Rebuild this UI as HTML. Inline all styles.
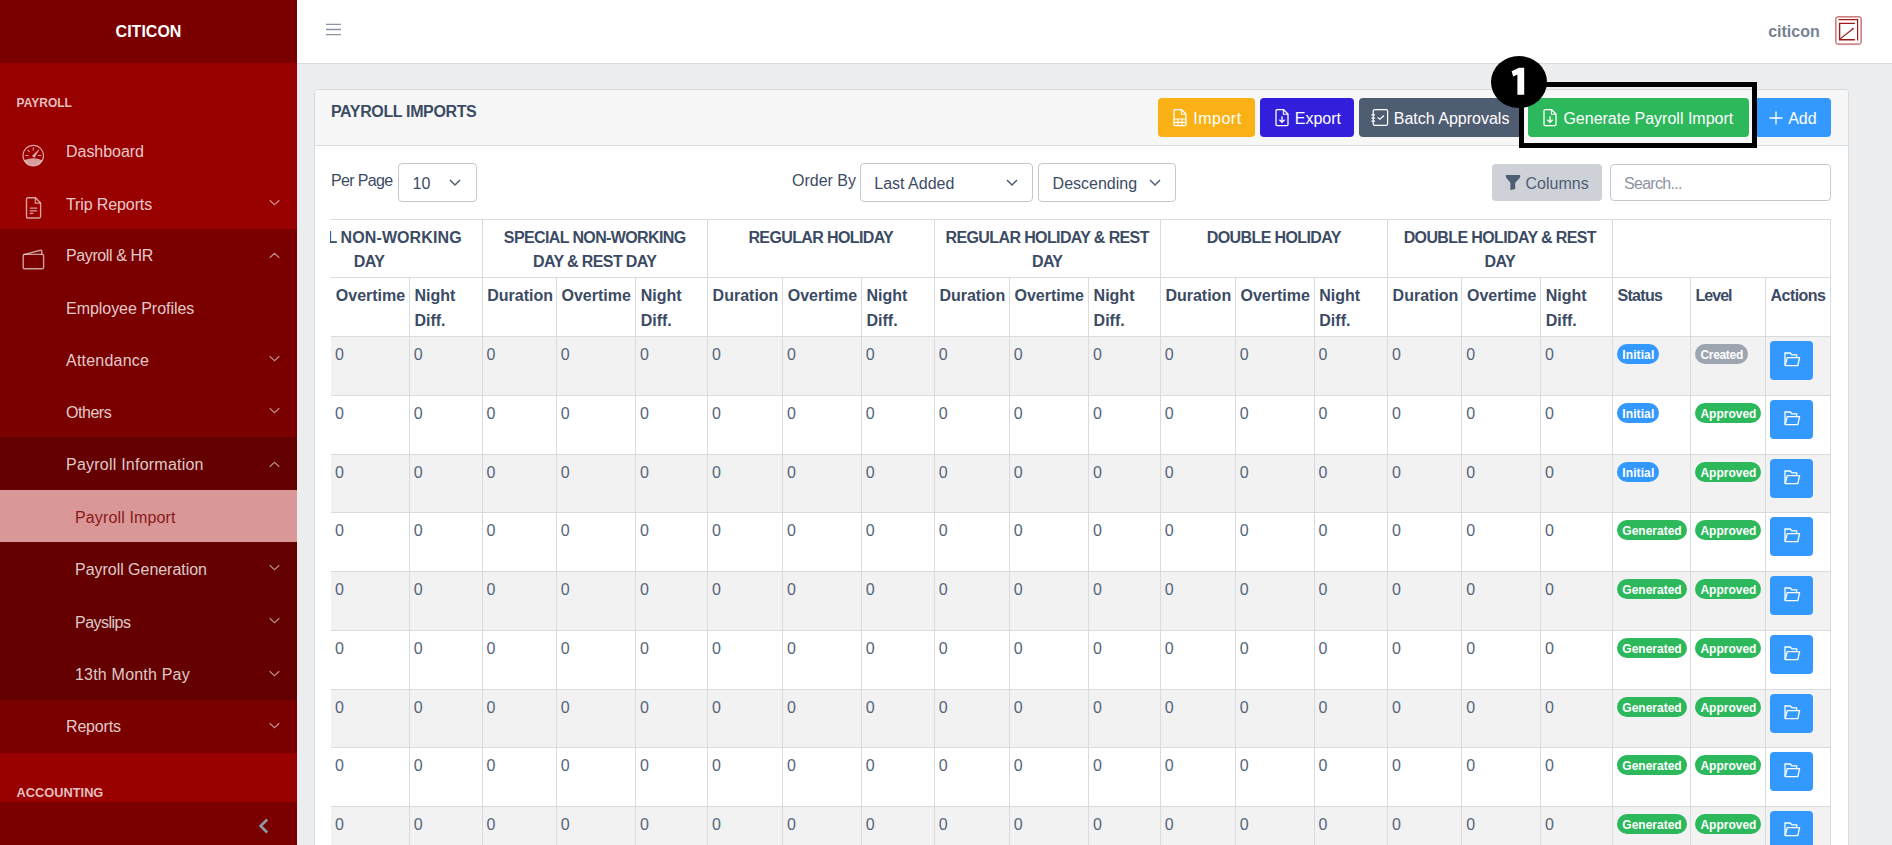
<!DOCTYPE html>
<html><head><meta charset="utf-8"><style>
html,body{margin:0;padding:0;width:1892px;height:845px;overflow:hidden;background:#ebedef;font-family:"Liberation Sans", sans-serif;}
.t{position:absolute;white-space:nowrap;}
.b{position:absolute;}
svg.b{display:block;overflow:visible}
.bd{position:absolute;height:20px;line-height:23.4px;padding:0 5px;border-radius:10px;color:#fff;font-weight:bold;font-size:12px;white-space:nowrap;}
</style></head><body>
<div class="b" style="left:0.00px;top:0.00px;width:297.00px;height:63.00px;background:#7a0000"></div>
<div class="b" style="left:0.00px;top:63.00px;width:297.00px;height:782.00px;background:#990000"></div>
<div class="t" style="left:-151.50px;width:600px;text-align:center;top:22.16px;font-size:16px;line-height:20px;font-weight:bold;color:#fff;">CITICON</div>
<div class="t" style="left:16.60px;top:95.94px;font-size:12px;line-height:15px;font-weight:bold;color:rgba(255,255,255,.75);">PAYROLL</div>
<div class="t" style="left:66.00px;top:142.06px;font-size:16px;line-height:20px;font-weight:normal;color:rgba(255,255,255,.8);letter-spacing:-0.034px;">Dashboard</div>
<div class="t" style="left:66.00px;top:195.06px;font-size:16px;line-height:20px;font-weight:normal;color:rgba(255,255,255,.8);letter-spacing:-0.112px;">Trip Reports</div>
<svg class="b" style="left:268.50px;top:198.88px;" width="11" height="7" viewBox="0 0 11 7"><path d="M0.7 1.2 L5.5 5.6 L10.3 1.2" fill="none" stroke="rgba(255,255,255,.55)" stroke-width="1.2"/></svg>
<div class="b" style="left:0.00px;top:228.90px;width:297.00px;height:52.10px;background:#7a0000"></div>
<div class="t" style="left:66.00px;top:246.16px;font-size:16px;line-height:20px;font-weight:normal;color:rgba(255,255,255,.8);letter-spacing:-0.398px;">Payroll &amp; HR</div>
<svg class="b" style="left:268.50px;top:252.45px;" width="11" height="7" viewBox="0 0 11 7"><path d="M0.7 5.8 L5.5 1.4 L10.3 5.8" fill="none" stroke="rgba(255,255,255,.55)" stroke-width="1.2"/></svg>
<div class="b" style="left:0.00px;top:281.00px;width:297.00px;height:52.00px;background:#7a0000"></div>
<div class="t" style="left:66.00px;top:299.36px;font-size:16px;line-height:20px;font-weight:normal;color:rgba(255,255,255,.8);letter-spacing:-0.041px;">Employee Profiles</div>
<div class="b" style="left:0.00px;top:333.00px;width:297.00px;height:52.00px;background:#7a0000"></div>
<div class="t" style="left:66.00px;top:350.96px;font-size:16px;line-height:20px;font-weight:normal;color:rgba(255,255,255,.8);letter-spacing:0.217px;">Attendance</div>
<svg class="b" style="left:268.50px;top:355.00px;" width="11" height="7" viewBox="0 0 11 7"><path d="M0.7 1.2 L5.5 5.6 L10.3 1.2" fill="none" stroke="rgba(255,255,255,.55)" stroke-width="1.2"/></svg>
<div class="b" style="left:0.00px;top:385.00px;width:297.00px;height:52.00px;background:#7a0000"></div>
<div class="t" style="left:66.00px;top:403.36px;font-size:16px;line-height:20px;font-weight:normal;color:rgba(255,255,255,.8);letter-spacing:-0.464px;">Others</div>
<svg class="b" style="left:268.50px;top:407.00px;" width="11" height="7" viewBox="0 0 11 7"><path d="M0.7 1.2 L5.5 5.6 L10.3 1.2" fill="none" stroke="rgba(255,255,255,.55)" stroke-width="1.2"/></svg>
<div class="b" style="left:0.00px;top:437.00px;width:297.00px;height:53.00px;background:#640000"></div>
<div class="t" style="left:66.00px;top:455.06px;font-size:16px;line-height:20px;font-weight:normal;color:rgba(255,255,255,.8);letter-spacing:0.228px;">Payroll Information</div>
<svg class="b" style="left:268.50px;top:461.00px;" width="11" height="7" viewBox="0 0 11 7"><path d="M0.7 5.8 L5.5 1.4 L10.3 5.8" fill="none" stroke="rgba(255,255,255,.55)" stroke-width="1.2"/></svg>
<div class="b" style="left:0.00px;top:490.00px;width:297.00px;height:52.00px;background:#d99797"></div>
<div class="t" style="left:75.00px;top:507.86px;font-size:16px;line-height:20px;font-weight:normal;color:#8a1a1a;letter-spacing:0.131px;">Payroll Import</div>
<div class="b" style="left:0.00px;top:542.00px;width:297.00px;height:52.70px;background:#640000"></div>
<div class="t" style="left:75.00px;top:560.06px;font-size:16px;line-height:20px;font-weight:normal;color:rgba(255,255,255,.8);letter-spacing:-0.031px;">Payroll Generation</div>
<svg class="b" style="left:268.50px;top:564.35px;" width="11" height="7" viewBox="0 0 11 7"><path d="M0.7 1.2 L5.5 5.6 L10.3 1.2" fill="none" stroke="rgba(255,255,255,.55)" stroke-width="1.2"/></svg>
<div class="b" style="left:0.00px;top:594.70px;width:297.00px;height:52.60px;background:#640000"></div>
<div class="t" style="left:75.00px;top:612.56px;font-size:16px;line-height:20px;font-weight:normal;color:rgba(255,255,255,.8);letter-spacing:-0.511px;">Payslips</div>
<svg class="b" style="left:268.50px;top:617.00px;" width="11" height="7" viewBox="0 0 11 7"><path d="M0.7 1.2 L5.5 5.6 L10.3 1.2" fill="none" stroke="rgba(255,255,255,.55)" stroke-width="1.2"/></svg>
<div class="b" style="left:0.00px;top:647.30px;width:297.00px;height:52.70px;background:#640000"></div>
<div class="t" style="left:75.00px;top:664.86px;font-size:16px;line-height:20px;font-weight:normal;color:rgba(255,255,255,.8);letter-spacing:0.202px;">13th Month Pay</div>
<svg class="b" style="left:268.50px;top:669.65px;" width="11" height="7" viewBox="0 0 11 7"><path d="M0.7 1.2 L5.5 5.6 L10.3 1.2" fill="none" stroke="rgba(255,255,255,.55)" stroke-width="1.2"/></svg>
<div class="b" style="left:0.00px;top:700.00px;width:297.00px;height:52.90px;background:#7a0000"></div>
<div class="t" style="left:66.00px;top:717.16px;font-size:16px;line-height:20px;font-weight:normal;color:rgba(255,255,255,.8);letter-spacing:-0.170px;">Reports</div>
<svg class="b" style="left:268.50px;top:722.45px;" width="11" height="7" viewBox="0 0 11 7"><path d="M0.7 1.2 L5.5 5.6 L10.3 1.2" fill="none" stroke="rgba(255,255,255,.55)" stroke-width="1.2"/></svg>
<svg class="b" style="left:18.00px;top:140.00px;" width="30" height="30" viewBox="0 0 30 30"><circle cx="15.25" cy="15.55" r="10.25" fill="none" stroke="rgba(255,255,255,.62)" stroke-width="1.15"/><path d="M6.2 20.2 Q15.25 16.2 24.3 20.2 A10.25 10.25 0 0 1 6.2 20.2Z" fill="rgba(255,255,255,.62)"/><path d="M15.25 7.4V10.4 M9.6 9.9L11.5 11.8 M7.4 15.5H10.6 M19.9 15.5H23.1" stroke="rgba(255,255,255,.62)" stroke-width="1.1" fill="none"/><path d="M14.3 15.9 L20.9 9.8 L16.4 17.4 Z" fill="rgba(255,255,255,.62)" stroke="rgba(255,255,255,.62)" stroke-width="0.6" stroke-linejoin="round"/></svg>
<svg class="b" style="left:25.00px;top:197.00px;" width="17" height="22" viewBox="0 0 17 22"><path d="M1.5 2.2Q1.5 0.8 2.9 0.8H10.5L15.6 6V19.6Q15.6 21 14.2 21H2.9Q1.5 21 1.5 19.6Z" fill="none" stroke="rgba(255,255,255,.62)" stroke-width="1.4"/><path d="M10.3 0.8V6.2H15.6" fill="none" stroke="rgba(255,255,255,.62)" stroke-width="1.2"/><path d="M4.8 11.2H12.2M4.8 13.8H12.2M4.8 16.4H8.2" stroke="rgba(255,255,255,.62)" stroke-width="1.3"/></svg>
<svg class="b" style="left:22.00px;top:249.00px;" width="23" height="21" viewBox="0 0 23 21"><rect x="1.2" y="5.4" width="20.4" height="14.4" rx="1.4" fill="none" stroke="rgba(255,255,255,.62)" stroke-width="1.4"/><path d="M1.6 5.6L18.6 1.2Q19.8 1 19.8 2.2V5.4" fill="none" stroke="rgba(255,255,255,.62)" stroke-width="1.4"/></svg>
<div class="t" style="left:16.60px;top:785.26px;font-size:12.8px;line-height:16px;font-weight:bold;color:rgba(255,255,255,.75);">ACCOUNTING</div>
<div class="b" style="left:0.00px;top:802.00px;width:297.00px;height:43.00px;background:#7a0000"></div>
<svg class="b" style="left:258.00px;top:818.00px;" width="11" height="16" viewBox="0 0 11 16"><path d="M9.2 1.5L2.6 8L9.2 14.5" fill="none" stroke="#8a98a8" stroke-width="2.6"/></svg>
<div class="b" style="left:297.00px;top:0.00px;width:1595.00px;height:63.00px;background:#fff"></div>
<div class="b" style="left:297.00px;top:63.00px;width:1595.00px;height:1.00px;background:#d8dbe0"></div>
<div class="b" style="left:297.00px;top:64.00px;width:1595.00px;height:781.00px;background:#ebedef"></div>
<svg class="b" style="left:325.00px;top:22.00px;" width="17" height="15" viewBox="0 0 17 15"><path d="M1 2.4H16M1 7.5H16M1 12.6H16" stroke="#8a93a2" stroke-width="1.3"/></svg>
<div class="t" style="left:1219.70px;width:600px;text-align:right;top:22.16px;font-size:16px;line-height:20px;font-weight:bold;color:#768192;">citicon</div>
<svg class="b" style="left:1835.00px;top:16.00px;" width="27" height="29" viewBox="0 0 27 29"><rect x="0.9" y="0.9" width="25.2" height="27.2" rx="1.6" fill="none" stroke="#b03030" stroke-width="1"/><path d="M3.6 3.6H22.6V24.6" fill="none" stroke="#a01818" stroke-width="1.2"/><path d="M19.9 7.4H4.6V23.8H19.9" fill="none" stroke="#a01818" stroke-width="1.4"/><path d="M4.6 23.4L17.4 13.2" stroke="#a01818" stroke-width="1.2"/><circle cx="17.8" cy="12.8" r="1" fill="#a01818"/></svg>
<div class="b" style="left:314.00px;top:89.00px;width:1535.00px;height:781.00px;background:#fff;border:1px solid #d8dbe0;border-radius:4px;box-sizing:border-box"></div>
<div class="b" style="left:315.00px;top:90.00px;width:1533.00px;height:55.00px;background:#f7f7f7;border-radius:3px 3px 0 0"></div>
<div class="b" style="left:315.00px;top:145.00px;width:1533.00px;height:1.00px;background:#d8dbe0"></div>
<div class="t" style="left:331.00px;top:102.46px;font-size:16px;line-height:20px;font-weight:bold;color:#3c4b64;letter-spacing:-0.36px;">PAYROLL IMPORTS</div>
<div class="b" style="left:1158.00px;top:98.00px;width:97.00px;height:39.00px;background:#f9b115;border-radius:4px"></div>
<div class="t" style="left:1193.30px;top:109.36px;font-size:16px;line-height:20px;font-weight:normal;color:#fff;letter-spacing:0.5px;">Import</div>
<svg class="b" style="left:1173.00px;top:109.00px;" width="14" height="18" viewBox="0 0 14 18"><path d="M1 1.8Q1 0.7 2.1 0.7H8.6L13 5V15.6Q13 16.6 11.9 16.6H2.1Q1 16.6 1 15.6Z" fill="none" stroke="#fff" stroke-width="1.3"/><path d="M8.4 0.7V5.2H13" fill="none" stroke="#fff" stroke-width="1.1"/><path d="M1 10H13M1 13.3H13M5 10V16.6M9 10V16.6" stroke="#fff" stroke-width="1.2"/></svg>
<div class="b" style="left:1260.00px;top:98.00px;width:93.50px;height:39.00px;background:#321fdb;border-radius:4px"></div>
<div class="t" style="left:1294.80px;top:109.36px;font-size:16px;line-height:20px;font-weight:normal;color:#fff;letter-spacing:0px;">Export</div>
<svg class="b" style="left:1275.00px;top:109.00px;" width="14" height="18" viewBox="0 0 14 18"><path d="M1 1.8Q1 0.7 2.1 0.7H8.6L13 5V15.6Q13 16.6 11.9 16.6H2.1Q1 16.6 1 15.6Z" fill="none" stroke="#fff" stroke-width="1.3"/><path d="M8.4 0.7V5.2H13" fill="none" stroke="#fff" stroke-width="1.1"/><path d="M7 7.2V13.4M4.4 10.8L7 13.4L9.6 10.8" fill="none" stroke="#fff" stroke-width="1.3"/></svg>
<div class="b" style="left:1358.70px;top:98.00px;width:164.30px;height:39.00px;background:#4f5d73;border-radius:4px"></div>
<div class="t" style="left:1393.80px;top:109.36px;font-size:16px;line-height:20px;font-weight:normal;color:#fff;letter-spacing:0px;">Batch Approvals</div>
<svg class="b" style="left:1370.00px;top:108.00px;" width="20" height="20" viewBox="0 0 20 20"><path d="M3.2 5V3.2Q3.2 1.7 4.7 1.7H16.2Q17.6 1.7 17.6 3.2V15.8Q17.6 17.3 16.2 17.3H4.7Q3.2 17.3 3.2 15.8Z" fill="none" stroke="#fff" stroke-width="1.25"/><path d="M1.9 6.8H4.6M1.9 10.1H4.6M1.9 13.2H4.6" stroke="#fff" stroke-width="1.2" stroke-linecap="round"/><path d="M7.6 9.4L9.9 11.3L14 7.5" fill="none" stroke="#fff" stroke-width="1.2"/></svg>
<div class="b" style="left:1528.20px;top:98.00px;width:220.80px;height:39.00px;background:#2eb85c;border-radius:4px"></div>
<div class="t" style="left:1563.40px;top:109.36px;font-size:16px;line-height:20px;font-weight:normal;color:#fff;letter-spacing:0px;">Generate Payroll Import</div>
<svg class="b" style="left:1543.00px;top:109.00px;" width="14" height="18" viewBox="0 0 14 18"><path d="M1 1.8Q1 0.7 2.1 0.7H8.6L13 5V15.6Q13 16.6 11.9 16.6H2.1Q1 16.6 1 15.6Z" fill="none" stroke="#fff" stroke-width="1.3"/><path d="M8.4 0.7V5.2H13" fill="none" stroke="#fff" stroke-width="1.1"/><path d="M7 7.2V13.4M4.4 10.8L7 13.4L9.6 10.8" fill="none" stroke="#fff" stroke-width="1.3"/></svg>
<div class="b" style="left:1753.50px;top:98.00px;width:77.50px;height:39.00px;background:#39f;border-radius:4px"></div>
<svg class="b" style="left:1768.50px;top:111.00px;" width="14" height="14" viewBox="0 0 14 14"><path d="M7 0.5V13.5M0.5 7H13.5" stroke="#fff" stroke-width="1.3"/></svg>
<div class="t" style="left:1788.20px;top:109.36px;font-size:16px;line-height:20px;font-weight:normal;color:#fff;">Add</div>
<div class="b" style="left:1519.00px;top:82.00px;width:238.00px;height:66.00px;border:5px solid #000;box-sizing:border-box"></div>
<div class="b" style="left:1491px;top:55.8px;width:56px;height:52px;border-radius:50%;background:#000"></div>
<svg class="b" style="left:1510.00px;top:66.50px;" width="16" height="30" viewBox="0 0 16 30"><path d="M1.6 4.2L9 0.8H14.2V27.8H7.4V7.6L3.2 9.4Z" fill="#fff"/></svg>
<div class="t" style="left:331.00px;top:171.16px;font-size:16px;line-height:20px;font-weight:normal;color:#3c4b64;letter-spacing:-0.65px;">Per Page</div>
<div class="b" style="left:398.00px;top:163.00px;width:78.50px;height:39.00px;border:1px solid #c4c9d0;border-radius:4px;background:#fff;box-sizing:border-box"></div>
<div class="t" style="left:412.50px;top:174.16px;font-size:16px;line-height:20px;font-weight:normal;color:#3c4b64;">10</div>
<svg class="b" style="left:449.00px;top:178.50px;" width="12" height="7" viewBox="0 0 12 7"><path d="M1 1L6 6L11 1" fill="none" stroke="#4f5d73" stroke-width="1.5"/></svg>
<div class="t" style="left:792.00px;top:171.16px;font-size:16px;line-height:20px;font-weight:normal;color:#3c4b64;">Order By</div>
<div class="b" style="left:860.40px;top:163.00px;width:173.10px;height:39.00px;border:1px solid #c4c9d0;border-radius:4px;background:#fff;box-sizing:border-box"></div>
<div class="t" style="left:874.30px;top:174.16px;font-size:16px;line-height:20px;font-weight:normal;color:#3c4b64;">Last Added</div>
<svg class="b" style="left:1006.00px;top:178.50px;" width="12" height="7" viewBox="0 0 12 7"><path d="M1 1L6 6L11 1" fill="none" stroke="#4f5d73" stroke-width="1.5"/></svg>
<div class="b" style="left:1038.20px;top:163.00px;width:137.40px;height:39.00px;border:1px solid #c4c9d0;border-radius:4px;background:#fff;box-sizing:border-box"></div>
<div class="t" style="left:1052.60px;top:174.16px;font-size:16px;line-height:20px;font-weight:normal;color:#3c4b64;">Descending</div>
<svg class="b" style="left:1148.50px;top:178.50px;" width="12" height="7" viewBox="0 0 12 7"><path d="M1 1L6 6L11 1" fill="none" stroke="#4f5d73" stroke-width="1.5"/></svg>
<div class="b" style="left:1491.70px;top:164.00px;width:110.10px;height:37.00px;background:#ced2d8;border-radius:4px"></div>
<svg class="b" style="left:1505.00px;top:174.00px;" width="16" height="17" viewBox="0 0 16 17"><path d="M0.9 1.2Q0.9 0.9 1.3 0.9H14.8Q15.2 0.9 15.2 1.2V2.6Q15.2 3.2 14.6 3.9L10.2 8.8V14.9L5.4 16.1V8.8L1.4 3.9Q0.9 3.2 0.9 2.6Z" fill="#4f5d73"/></svg>
<div class="t" style="left:1525.50px;top:173.66px;font-size:16px;line-height:20px;font-weight:normal;color:#4f5d73;">Columns</div>
<div class="b" style="left:1610.20px;top:164.00px;width:220.60px;height:37.00px;border:1px solid #c4c9d0;border-radius:4px;background:#fff;box-sizing:border-box"></div>
<div class="t" style="left:1624.00px;top:173.66px;font-size:16px;line-height:20px;font-weight:normal;color:#8a93a2;letter-spacing:-0.7px;">Search...</div>
<div class="b" style="left:330px;top:0;width:1501px;height:845px;overflow:hidden">
<div class="b" style="left:1.00px;top:336.00px;width:1499.50px;height:59.00px;background:#f2f2f3"></div>
<div class="b" style="left:1.00px;top:454.00px;width:1499.50px;height:58.00px;background:#f2f2f3"></div>
<div class="b" style="left:1.00px;top:571.00px;width:1499.50px;height:59.00px;background:#f2f2f3"></div>
<div class="b" style="left:1.00px;top:689.00px;width:1499.50px;height:58.00px;background:#f2f2f3"></div>
<div class="b" style="left:1.00px;top:806.00px;width:1499.50px;height:59.00px;background:#f2f2f3"></div>
<div class="b" style="left:1.00px;top:219.00px;width:1499.50px;height:1.00px;background:#d8dbe0"></div>
<div class="b" style="left:1.00px;top:277.00px;width:1499.50px;height:1.00px;background:#d8dbe0"></div>
<div class="b" style="left:1.00px;top:336.00px;width:1499.50px;height:1.00px;background:#d8dbe0"></div>
<div class="b" style="left:1.00px;top:395.00px;width:1499.50px;height:1.00px;background:#d8dbe0"></div>
<div class="b" style="left:1.00px;top:454.00px;width:1499.50px;height:1.00px;background:#d8dbe0"></div>
<div class="b" style="left:1.00px;top:512.00px;width:1499.50px;height:1.00px;background:#d8dbe0"></div>
<div class="b" style="left:1.00px;top:571.00px;width:1499.50px;height:1.00px;background:#d8dbe0"></div>
<div class="b" style="left:1.00px;top:630.00px;width:1499.50px;height:1.00px;background:#d8dbe0"></div>
<div class="b" style="left:1.00px;top:689.00px;width:1499.50px;height:1.00px;background:#d8dbe0"></div>
<div class="b" style="left:1.00px;top:747.00px;width:1499.50px;height:1.00px;background:#d8dbe0"></div>
<div class="b" style="left:1.00px;top:806.00px;width:1499.50px;height:1.00px;background:#d8dbe0"></div>
<div class="b" style="left:1.00px;top:865.00px;width:1499.50px;height:1.00px;background:#d8dbe0"></div>
<div class="b" style="left:79.00px;top:277.50px;width:1.00px;height:567.50px;background:#d8dbe0"></div>
<div class="b" style="left:152.00px;top:219.50px;width:1.00px;height:625.50px;background:#d8dbe0"></div>
<div class="b" style="left:226.00px;top:277.50px;width:1.00px;height:567.50px;background:#d8dbe0"></div>
<div class="b" style="left:305.00px;top:277.50px;width:1.00px;height:567.50px;background:#d8dbe0"></div>
<div class="b" style="left:377.00px;top:219.50px;width:1.00px;height:625.50px;background:#d8dbe0"></div>
<div class="b" style="left:452.00px;top:277.50px;width:1.00px;height:567.50px;background:#d8dbe0"></div>
<div class="b" style="left:531.00px;top:277.50px;width:1.00px;height:567.50px;background:#d8dbe0"></div>
<div class="b" style="left:604.00px;top:219.50px;width:1.00px;height:625.50px;background:#d8dbe0"></div>
<div class="b" style="left:679.00px;top:277.50px;width:1.00px;height:567.50px;background:#d8dbe0"></div>
<div class="b" style="left:758.00px;top:277.50px;width:1.00px;height:567.50px;background:#d8dbe0"></div>
<div class="b" style="left:830.00px;top:219.50px;width:1.00px;height:625.50px;background:#d8dbe0"></div>
<div class="b" style="left:905.00px;top:277.50px;width:1.00px;height:567.50px;background:#d8dbe0"></div>
<div class="b" style="left:984.00px;top:277.50px;width:1.00px;height:567.50px;background:#d8dbe0"></div>
<div class="b" style="left:1057.00px;top:219.50px;width:1.00px;height:625.50px;background:#d8dbe0"></div>
<div class="b" style="left:1131.00px;top:277.50px;width:1.00px;height:567.50px;background:#d8dbe0"></div>
<div class="b" style="left:1210.00px;top:277.50px;width:1.00px;height:567.50px;background:#d8dbe0"></div>
<div class="b" style="left:1282.00px;top:219.50px;width:1.00px;height:625.50px;background:#d8dbe0"></div>
<div class="b" style="left:1360.00px;top:277.50px;width:1.00px;height:567.50px;background:#d8dbe0"></div>
<div class="b" style="left:1435.00px;top:277.50px;width:1.00px;height:567.50px;background:#d8dbe0"></div>
<div class="b" style="left:1500.00px;top:219.50px;width:1.00px;height:625.50px;background:#d8dbe0"></div>
</div>
<div class="b" style="left:330px;top:0;width:1501px;height:845px;overflow:hidden">
<div class="t" style="left:-2.60px;top:227.76px;font-size:16px;line-height:20px;font-weight:bold;color:#3c4b64;">L</div>
<div class="t" style="left:10.60px;top:227.76px;font-size:16px;line-height:20px;font-weight:bold;color:#3c4b64;letter-spacing:0.1px;">NON-WORKING</div>
<div class="t" style="left:-261.00px;width:600px;text-align:center;top:251.76px;font-size:16px;line-height:20px;font-weight:bold;color:#3c4b64;letter-spacing:-0.62px;">DAY</div>
<div class="t" style="left:-35.30px;width:600px;text-align:center;top:227.76px;font-size:16px;line-height:20px;font-weight:bold;color:#3c4b64;letter-spacing:-0.62px;">SPECIAL NON-WORKING</div>
<div class="t" style="left:-35.30px;width:600px;text-align:center;top:251.76px;font-size:16px;line-height:20px;font-weight:bold;color:#3c4b64;letter-spacing:-0.62px;">DAY &amp; REST DAY</div>
<div class="t" style="left:190.80px;width:600px;text-align:center;top:227.76px;font-size:16px;line-height:20px;font-weight:bold;color:#3c4b64;letter-spacing:-0.62px;">REGULAR HOLIDAY</div>
<div class="t" style="left:417.20px;width:600px;text-align:center;top:227.76px;font-size:16px;line-height:20px;font-weight:bold;color:#3c4b64;letter-spacing:-0.62px;">REGULAR HOLIDAY &amp; REST</div>
<div class="t" style="left:417.20px;width:600px;text-align:center;top:251.76px;font-size:16px;line-height:20px;font-weight:bold;color:#3c4b64;letter-spacing:-0.62px;">DAY</div>
<div class="t" style="left:643.80px;width:600px;text-align:center;top:227.76px;font-size:16px;line-height:20px;font-weight:bold;color:#3c4b64;letter-spacing:-0.62px;">DOUBLE HOLIDAY</div>
<div class="t" style="left:869.85px;width:600px;text-align:center;top:227.76px;font-size:16px;line-height:20px;font-weight:bold;color:#3c4b64;letter-spacing:-0.62px;">DOUBLE HOLIDAY &amp; REST</div>
<div class="t" style="left:869.85px;width:600px;text-align:center;top:251.76px;font-size:16px;line-height:20px;font-weight:bold;color:#3c4b64;letter-spacing:-0.62px;">DAY</div>
</div>
<div class="t" style="left:335.80px;top:286.06px;font-size:16px;line-height:20px;font-weight:bold;color:#3c4b64;letter-spacing:0px;">Overtime</div>
<div class="t" style="left:414.40px;top:286.06px;font-size:16px;line-height:20px;font-weight:bold;color:#3c4b64;letter-spacing:0px;">Night</div>
<div class="t" style="left:414.40px;top:311.06px;font-size:16px;line-height:20px;font-weight:bold;color:#3c4b64;letter-spacing:0px;">Diff.</div>
<div class="t" style="left:487.20px;top:286.06px;font-size:16px;line-height:20px;font-weight:bold;color:#3c4b64;letter-spacing:0px;">Duration</div>
<div class="t" style="left:561.50px;top:286.06px;font-size:16px;line-height:20px;font-weight:bold;color:#3c4b64;letter-spacing:0px;">Overtime</div>
<div class="t" style="left:640.70px;top:286.06px;font-size:16px;line-height:20px;font-weight:bold;color:#3c4b64;letter-spacing:0px;">Night</div>
<div class="t" style="left:640.70px;top:311.06px;font-size:16px;line-height:20px;font-weight:bold;color:#3c4b64;letter-spacing:0px;">Diff.</div>
<div class="t" style="left:712.60px;top:286.06px;font-size:16px;line-height:20px;font-weight:bold;color:#3c4b64;letter-spacing:0px;">Duration</div>
<div class="t" style="left:787.70px;top:286.06px;font-size:16px;line-height:20px;font-weight:bold;color:#3c4b64;letter-spacing:0px;">Overtime</div>
<div class="t" style="left:866.50px;top:286.06px;font-size:16px;line-height:20px;font-weight:bold;color:#3c4b64;letter-spacing:0px;">Night</div>
<div class="t" style="left:866.50px;top:311.06px;font-size:16px;line-height:20px;font-weight:bold;color:#3c4b64;letter-spacing:0px;">Diff.</div>
<div class="t" style="left:939.40px;top:286.06px;font-size:16px;line-height:20px;font-weight:bold;color:#3c4b64;letter-spacing:0px;">Duration</div>
<div class="t" style="left:1014.50px;top:286.06px;font-size:16px;line-height:20px;font-weight:bold;color:#3c4b64;letter-spacing:0px;">Overtime</div>
<div class="t" style="left:1093.60px;top:286.06px;font-size:16px;line-height:20px;font-weight:bold;color:#3c4b64;letter-spacing:0px;">Night</div>
<div class="t" style="left:1093.60px;top:311.06px;font-size:16px;line-height:20px;font-weight:bold;color:#3c4b64;letter-spacing:0px;">Diff.</div>
<div class="t" style="left:1165.40px;top:286.06px;font-size:16px;line-height:20px;font-weight:bold;color:#3c4b64;letter-spacing:0px;">Duration</div>
<div class="t" style="left:1240.50px;top:286.06px;font-size:16px;line-height:20px;font-weight:bold;color:#3c4b64;letter-spacing:0px;">Overtime</div>
<div class="t" style="left:1319.30px;top:286.06px;font-size:16px;line-height:20px;font-weight:bold;color:#3c4b64;letter-spacing:0px;">Night</div>
<div class="t" style="left:1319.30px;top:311.06px;font-size:16px;line-height:20px;font-weight:bold;color:#3c4b64;letter-spacing:0px;">Diff.</div>
<div class="t" style="left:1392.60px;top:286.06px;font-size:16px;line-height:20px;font-weight:bold;color:#3c4b64;letter-spacing:0px;">Duration</div>
<div class="t" style="left:1467.00px;top:286.06px;font-size:16px;line-height:20px;font-weight:bold;color:#3c4b64;letter-spacing:0px;">Overtime</div>
<div class="t" style="left:1545.70px;top:286.06px;font-size:16px;line-height:20px;font-weight:bold;color:#3c4b64;letter-spacing:0px;">Night</div>
<div class="t" style="left:1545.70px;top:311.06px;font-size:16px;line-height:20px;font-weight:bold;color:#3c4b64;letter-spacing:0px;">Diff.</div>
<div class="t" style="left:1617.50px;top:286.06px;font-size:16px;line-height:20px;font-weight:bold;color:#3c4b64;letter-spacing:-0.7px;">Status</div>
<div class="t" style="left:1695.60px;top:286.06px;font-size:16px;line-height:20px;font-weight:bold;color:#3c4b64;letter-spacing:-1.0px;">Level</div>
<div class="t" style="left:1770.60px;top:286.06px;font-size:16px;line-height:20px;font-weight:bold;color:#3c4b64;letter-spacing:-0.55px;">Actions</div>
<div class="t" style="left:335.10px;top:344.76px;font-size:16px;line-height:20px;font-weight:normal;color:#56647a;">0</div>
<div class="t" style="left:413.70px;top:344.76px;font-size:16px;line-height:20px;font-weight:normal;color:#56647a;">0</div>
<div class="t" style="left:486.50px;top:344.76px;font-size:16px;line-height:20px;font-weight:normal;color:#56647a;">0</div>
<div class="t" style="left:560.80px;top:344.76px;font-size:16px;line-height:20px;font-weight:normal;color:#56647a;">0</div>
<div class="t" style="left:640.00px;top:344.76px;font-size:16px;line-height:20px;font-weight:normal;color:#56647a;">0</div>
<div class="t" style="left:711.90px;top:344.76px;font-size:16px;line-height:20px;font-weight:normal;color:#56647a;">0</div>
<div class="t" style="left:787.00px;top:344.76px;font-size:16px;line-height:20px;font-weight:normal;color:#56647a;">0</div>
<div class="t" style="left:865.80px;top:344.76px;font-size:16px;line-height:20px;font-weight:normal;color:#56647a;">0</div>
<div class="t" style="left:938.70px;top:344.76px;font-size:16px;line-height:20px;font-weight:normal;color:#56647a;">0</div>
<div class="t" style="left:1013.80px;top:344.76px;font-size:16px;line-height:20px;font-weight:normal;color:#56647a;">0</div>
<div class="t" style="left:1092.90px;top:344.76px;font-size:16px;line-height:20px;font-weight:normal;color:#56647a;">0</div>
<div class="t" style="left:1164.70px;top:344.76px;font-size:16px;line-height:20px;font-weight:normal;color:#56647a;">0</div>
<div class="t" style="left:1239.80px;top:344.76px;font-size:16px;line-height:20px;font-weight:normal;color:#56647a;">0</div>
<div class="t" style="left:1318.60px;top:344.76px;font-size:16px;line-height:20px;font-weight:normal;color:#56647a;">0</div>
<div class="t" style="left:1391.90px;top:344.76px;font-size:16px;line-height:20px;font-weight:normal;color:#56647a;">0</div>
<div class="t" style="left:1466.30px;top:344.76px;font-size:16px;line-height:20px;font-weight:normal;color:#56647a;">0</div>
<div class="t" style="left:1545.00px;top:344.76px;font-size:16px;line-height:20px;font-weight:normal;color:#56647a;">0</div>
<div class="bd" style="left:1617.30px;top:344.00px;background:#39f;letter-spacing:0.1px">Initial</div>
<div class="bd" style="left:1695.40px;top:344.00px;background:#9da5b1;letter-spacing:-0.3px">Created</div>
<div class="b" style="left:1770.00px;top:341.00px;width:43.00px;height:39.00px;background:#39f;border-radius:4px"></div>
<svg class="b" style="left:1783.50px;top:352.00px;" width="17" height="15" viewBox="0 0 17 15"><path d="M1 13.6V1H6.2L7.8 2.8H12.6V5.4" fill="none" stroke="#fff" stroke-width="1.3"/><path d="M3.2 5.6H15.6L13.8 13.6H1.2Z" fill="none" stroke="#fff" stroke-width="1.3" stroke-linejoin="round"/></svg>
<div class="t" style="left:335.10px;top:403.76px;font-size:16px;line-height:20px;font-weight:normal;color:#56647a;">0</div>
<div class="t" style="left:413.70px;top:403.76px;font-size:16px;line-height:20px;font-weight:normal;color:#56647a;">0</div>
<div class="t" style="left:486.50px;top:403.76px;font-size:16px;line-height:20px;font-weight:normal;color:#56647a;">0</div>
<div class="t" style="left:560.80px;top:403.76px;font-size:16px;line-height:20px;font-weight:normal;color:#56647a;">0</div>
<div class="t" style="left:640.00px;top:403.76px;font-size:16px;line-height:20px;font-weight:normal;color:#56647a;">0</div>
<div class="t" style="left:711.90px;top:403.76px;font-size:16px;line-height:20px;font-weight:normal;color:#56647a;">0</div>
<div class="t" style="left:787.00px;top:403.76px;font-size:16px;line-height:20px;font-weight:normal;color:#56647a;">0</div>
<div class="t" style="left:865.80px;top:403.76px;font-size:16px;line-height:20px;font-weight:normal;color:#56647a;">0</div>
<div class="t" style="left:938.70px;top:403.76px;font-size:16px;line-height:20px;font-weight:normal;color:#56647a;">0</div>
<div class="t" style="left:1013.80px;top:403.76px;font-size:16px;line-height:20px;font-weight:normal;color:#56647a;">0</div>
<div class="t" style="left:1092.90px;top:403.76px;font-size:16px;line-height:20px;font-weight:normal;color:#56647a;">0</div>
<div class="t" style="left:1164.70px;top:403.76px;font-size:16px;line-height:20px;font-weight:normal;color:#56647a;">0</div>
<div class="t" style="left:1239.80px;top:403.76px;font-size:16px;line-height:20px;font-weight:normal;color:#56647a;">0</div>
<div class="t" style="left:1318.60px;top:403.76px;font-size:16px;line-height:20px;font-weight:normal;color:#56647a;">0</div>
<div class="t" style="left:1391.90px;top:403.76px;font-size:16px;line-height:20px;font-weight:normal;color:#56647a;">0</div>
<div class="t" style="left:1466.30px;top:403.76px;font-size:16px;line-height:20px;font-weight:normal;color:#56647a;">0</div>
<div class="t" style="left:1545.00px;top:403.76px;font-size:16px;line-height:20px;font-weight:normal;color:#56647a;">0</div>
<div class="bd" style="left:1617.30px;top:403.00px;background:#39f;letter-spacing:0.1px">Initial</div>
<div class="bd" style="left:1695.40px;top:403.00px;background:#2eb85c;letter-spacing:0px">Approved</div>
<div class="b" style="left:1770.00px;top:400.00px;width:43.00px;height:39.00px;background:#39f;border-radius:4px"></div>
<svg class="b" style="left:1783.50px;top:411.00px;" width="17" height="15" viewBox="0 0 17 15"><path d="M1 13.6V1H6.2L7.8 2.8H12.6V5.4" fill="none" stroke="#fff" stroke-width="1.3"/><path d="M3.2 5.6H15.6L13.8 13.6H1.2Z" fill="none" stroke="#fff" stroke-width="1.3" stroke-linejoin="round"/></svg>
<div class="t" style="left:335.10px;top:462.76px;font-size:16px;line-height:20px;font-weight:normal;color:#56647a;">0</div>
<div class="t" style="left:413.70px;top:462.76px;font-size:16px;line-height:20px;font-weight:normal;color:#56647a;">0</div>
<div class="t" style="left:486.50px;top:462.76px;font-size:16px;line-height:20px;font-weight:normal;color:#56647a;">0</div>
<div class="t" style="left:560.80px;top:462.76px;font-size:16px;line-height:20px;font-weight:normal;color:#56647a;">0</div>
<div class="t" style="left:640.00px;top:462.76px;font-size:16px;line-height:20px;font-weight:normal;color:#56647a;">0</div>
<div class="t" style="left:711.90px;top:462.76px;font-size:16px;line-height:20px;font-weight:normal;color:#56647a;">0</div>
<div class="t" style="left:787.00px;top:462.76px;font-size:16px;line-height:20px;font-weight:normal;color:#56647a;">0</div>
<div class="t" style="left:865.80px;top:462.76px;font-size:16px;line-height:20px;font-weight:normal;color:#56647a;">0</div>
<div class="t" style="left:938.70px;top:462.76px;font-size:16px;line-height:20px;font-weight:normal;color:#56647a;">0</div>
<div class="t" style="left:1013.80px;top:462.76px;font-size:16px;line-height:20px;font-weight:normal;color:#56647a;">0</div>
<div class="t" style="left:1092.90px;top:462.76px;font-size:16px;line-height:20px;font-weight:normal;color:#56647a;">0</div>
<div class="t" style="left:1164.70px;top:462.76px;font-size:16px;line-height:20px;font-weight:normal;color:#56647a;">0</div>
<div class="t" style="left:1239.80px;top:462.76px;font-size:16px;line-height:20px;font-weight:normal;color:#56647a;">0</div>
<div class="t" style="left:1318.60px;top:462.76px;font-size:16px;line-height:20px;font-weight:normal;color:#56647a;">0</div>
<div class="t" style="left:1391.90px;top:462.76px;font-size:16px;line-height:20px;font-weight:normal;color:#56647a;">0</div>
<div class="t" style="left:1466.30px;top:462.76px;font-size:16px;line-height:20px;font-weight:normal;color:#56647a;">0</div>
<div class="t" style="left:1545.00px;top:462.76px;font-size:16px;line-height:20px;font-weight:normal;color:#56647a;">0</div>
<div class="bd" style="left:1617.30px;top:462.00px;background:#39f;letter-spacing:0.1px">Initial</div>
<div class="bd" style="left:1695.40px;top:462.00px;background:#2eb85c;letter-spacing:0px">Approved</div>
<div class="b" style="left:1770.00px;top:459.00px;width:43.00px;height:39.00px;background:#39f;border-radius:4px"></div>
<svg class="b" style="left:1783.50px;top:470.00px;" width="17" height="15" viewBox="0 0 17 15"><path d="M1 13.6V1H6.2L7.8 2.8H12.6V5.4" fill="none" stroke="#fff" stroke-width="1.3"/><path d="M3.2 5.6H15.6L13.8 13.6H1.2Z" fill="none" stroke="#fff" stroke-width="1.3" stroke-linejoin="round"/></svg>
<div class="t" style="left:335.10px;top:520.76px;font-size:16px;line-height:20px;font-weight:normal;color:#56647a;">0</div>
<div class="t" style="left:413.70px;top:520.76px;font-size:16px;line-height:20px;font-weight:normal;color:#56647a;">0</div>
<div class="t" style="left:486.50px;top:520.76px;font-size:16px;line-height:20px;font-weight:normal;color:#56647a;">0</div>
<div class="t" style="left:560.80px;top:520.76px;font-size:16px;line-height:20px;font-weight:normal;color:#56647a;">0</div>
<div class="t" style="left:640.00px;top:520.76px;font-size:16px;line-height:20px;font-weight:normal;color:#56647a;">0</div>
<div class="t" style="left:711.90px;top:520.76px;font-size:16px;line-height:20px;font-weight:normal;color:#56647a;">0</div>
<div class="t" style="left:787.00px;top:520.76px;font-size:16px;line-height:20px;font-weight:normal;color:#56647a;">0</div>
<div class="t" style="left:865.80px;top:520.76px;font-size:16px;line-height:20px;font-weight:normal;color:#56647a;">0</div>
<div class="t" style="left:938.70px;top:520.76px;font-size:16px;line-height:20px;font-weight:normal;color:#56647a;">0</div>
<div class="t" style="left:1013.80px;top:520.76px;font-size:16px;line-height:20px;font-weight:normal;color:#56647a;">0</div>
<div class="t" style="left:1092.90px;top:520.76px;font-size:16px;line-height:20px;font-weight:normal;color:#56647a;">0</div>
<div class="t" style="left:1164.70px;top:520.76px;font-size:16px;line-height:20px;font-weight:normal;color:#56647a;">0</div>
<div class="t" style="left:1239.80px;top:520.76px;font-size:16px;line-height:20px;font-weight:normal;color:#56647a;">0</div>
<div class="t" style="left:1318.60px;top:520.76px;font-size:16px;line-height:20px;font-weight:normal;color:#56647a;">0</div>
<div class="t" style="left:1391.90px;top:520.76px;font-size:16px;line-height:20px;font-weight:normal;color:#56647a;">0</div>
<div class="t" style="left:1466.30px;top:520.76px;font-size:16px;line-height:20px;font-weight:normal;color:#56647a;">0</div>
<div class="t" style="left:1545.00px;top:520.76px;font-size:16px;line-height:20px;font-weight:normal;color:#56647a;">0</div>
<div class="bd" style="left:1617.30px;top:520.00px;background:#2eb85c;letter-spacing:0px">Generated</div>
<div class="bd" style="left:1695.40px;top:520.00px;background:#2eb85c;letter-spacing:0px">Approved</div>
<div class="b" style="left:1770.00px;top:517.00px;width:43.00px;height:39.00px;background:#39f;border-radius:4px"></div>
<svg class="b" style="left:1783.50px;top:528.00px;" width="17" height="15" viewBox="0 0 17 15"><path d="M1 13.6V1H6.2L7.8 2.8H12.6V5.4" fill="none" stroke="#fff" stroke-width="1.3"/><path d="M3.2 5.6H15.6L13.8 13.6H1.2Z" fill="none" stroke="#fff" stroke-width="1.3" stroke-linejoin="round"/></svg>
<div class="t" style="left:335.10px;top:579.76px;font-size:16px;line-height:20px;font-weight:normal;color:#56647a;">0</div>
<div class="t" style="left:413.70px;top:579.76px;font-size:16px;line-height:20px;font-weight:normal;color:#56647a;">0</div>
<div class="t" style="left:486.50px;top:579.76px;font-size:16px;line-height:20px;font-weight:normal;color:#56647a;">0</div>
<div class="t" style="left:560.80px;top:579.76px;font-size:16px;line-height:20px;font-weight:normal;color:#56647a;">0</div>
<div class="t" style="left:640.00px;top:579.76px;font-size:16px;line-height:20px;font-weight:normal;color:#56647a;">0</div>
<div class="t" style="left:711.90px;top:579.76px;font-size:16px;line-height:20px;font-weight:normal;color:#56647a;">0</div>
<div class="t" style="left:787.00px;top:579.76px;font-size:16px;line-height:20px;font-weight:normal;color:#56647a;">0</div>
<div class="t" style="left:865.80px;top:579.76px;font-size:16px;line-height:20px;font-weight:normal;color:#56647a;">0</div>
<div class="t" style="left:938.70px;top:579.76px;font-size:16px;line-height:20px;font-weight:normal;color:#56647a;">0</div>
<div class="t" style="left:1013.80px;top:579.76px;font-size:16px;line-height:20px;font-weight:normal;color:#56647a;">0</div>
<div class="t" style="left:1092.90px;top:579.76px;font-size:16px;line-height:20px;font-weight:normal;color:#56647a;">0</div>
<div class="t" style="left:1164.70px;top:579.76px;font-size:16px;line-height:20px;font-weight:normal;color:#56647a;">0</div>
<div class="t" style="left:1239.80px;top:579.76px;font-size:16px;line-height:20px;font-weight:normal;color:#56647a;">0</div>
<div class="t" style="left:1318.60px;top:579.76px;font-size:16px;line-height:20px;font-weight:normal;color:#56647a;">0</div>
<div class="t" style="left:1391.90px;top:579.76px;font-size:16px;line-height:20px;font-weight:normal;color:#56647a;">0</div>
<div class="t" style="left:1466.30px;top:579.76px;font-size:16px;line-height:20px;font-weight:normal;color:#56647a;">0</div>
<div class="t" style="left:1545.00px;top:579.76px;font-size:16px;line-height:20px;font-weight:normal;color:#56647a;">0</div>
<div class="bd" style="left:1617.30px;top:579.00px;background:#2eb85c;letter-spacing:0px">Generated</div>
<div class="bd" style="left:1695.40px;top:579.00px;background:#2eb85c;letter-spacing:0px">Approved</div>
<div class="b" style="left:1770.00px;top:576.00px;width:43.00px;height:39.00px;background:#39f;border-radius:4px"></div>
<svg class="b" style="left:1783.50px;top:587.00px;" width="17" height="15" viewBox="0 0 17 15"><path d="M1 13.6V1H6.2L7.8 2.8H12.6V5.4" fill="none" stroke="#fff" stroke-width="1.3"/><path d="M3.2 5.6H15.6L13.8 13.6H1.2Z" fill="none" stroke="#fff" stroke-width="1.3" stroke-linejoin="round"/></svg>
<div class="t" style="left:335.10px;top:638.76px;font-size:16px;line-height:20px;font-weight:normal;color:#56647a;">0</div>
<div class="t" style="left:413.70px;top:638.76px;font-size:16px;line-height:20px;font-weight:normal;color:#56647a;">0</div>
<div class="t" style="left:486.50px;top:638.76px;font-size:16px;line-height:20px;font-weight:normal;color:#56647a;">0</div>
<div class="t" style="left:560.80px;top:638.76px;font-size:16px;line-height:20px;font-weight:normal;color:#56647a;">0</div>
<div class="t" style="left:640.00px;top:638.76px;font-size:16px;line-height:20px;font-weight:normal;color:#56647a;">0</div>
<div class="t" style="left:711.90px;top:638.76px;font-size:16px;line-height:20px;font-weight:normal;color:#56647a;">0</div>
<div class="t" style="left:787.00px;top:638.76px;font-size:16px;line-height:20px;font-weight:normal;color:#56647a;">0</div>
<div class="t" style="left:865.80px;top:638.76px;font-size:16px;line-height:20px;font-weight:normal;color:#56647a;">0</div>
<div class="t" style="left:938.70px;top:638.76px;font-size:16px;line-height:20px;font-weight:normal;color:#56647a;">0</div>
<div class="t" style="left:1013.80px;top:638.76px;font-size:16px;line-height:20px;font-weight:normal;color:#56647a;">0</div>
<div class="t" style="left:1092.90px;top:638.76px;font-size:16px;line-height:20px;font-weight:normal;color:#56647a;">0</div>
<div class="t" style="left:1164.70px;top:638.76px;font-size:16px;line-height:20px;font-weight:normal;color:#56647a;">0</div>
<div class="t" style="left:1239.80px;top:638.76px;font-size:16px;line-height:20px;font-weight:normal;color:#56647a;">0</div>
<div class="t" style="left:1318.60px;top:638.76px;font-size:16px;line-height:20px;font-weight:normal;color:#56647a;">0</div>
<div class="t" style="left:1391.90px;top:638.76px;font-size:16px;line-height:20px;font-weight:normal;color:#56647a;">0</div>
<div class="t" style="left:1466.30px;top:638.76px;font-size:16px;line-height:20px;font-weight:normal;color:#56647a;">0</div>
<div class="t" style="left:1545.00px;top:638.76px;font-size:16px;line-height:20px;font-weight:normal;color:#56647a;">0</div>
<div class="bd" style="left:1617.30px;top:638.00px;background:#2eb85c;letter-spacing:0px">Generated</div>
<div class="bd" style="left:1695.40px;top:638.00px;background:#2eb85c;letter-spacing:0px">Approved</div>
<div class="b" style="left:1770.00px;top:635.00px;width:43.00px;height:39.00px;background:#39f;border-radius:4px"></div>
<svg class="b" style="left:1783.50px;top:646.00px;" width="17" height="15" viewBox="0 0 17 15"><path d="M1 13.6V1H6.2L7.8 2.8H12.6V5.4" fill="none" stroke="#fff" stroke-width="1.3"/><path d="M3.2 5.6H15.6L13.8 13.6H1.2Z" fill="none" stroke="#fff" stroke-width="1.3" stroke-linejoin="round"/></svg>
<div class="t" style="left:335.10px;top:697.76px;font-size:16px;line-height:20px;font-weight:normal;color:#56647a;">0</div>
<div class="t" style="left:413.70px;top:697.76px;font-size:16px;line-height:20px;font-weight:normal;color:#56647a;">0</div>
<div class="t" style="left:486.50px;top:697.76px;font-size:16px;line-height:20px;font-weight:normal;color:#56647a;">0</div>
<div class="t" style="left:560.80px;top:697.76px;font-size:16px;line-height:20px;font-weight:normal;color:#56647a;">0</div>
<div class="t" style="left:640.00px;top:697.76px;font-size:16px;line-height:20px;font-weight:normal;color:#56647a;">0</div>
<div class="t" style="left:711.90px;top:697.76px;font-size:16px;line-height:20px;font-weight:normal;color:#56647a;">0</div>
<div class="t" style="left:787.00px;top:697.76px;font-size:16px;line-height:20px;font-weight:normal;color:#56647a;">0</div>
<div class="t" style="left:865.80px;top:697.76px;font-size:16px;line-height:20px;font-weight:normal;color:#56647a;">0</div>
<div class="t" style="left:938.70px;top:697.76px;font-size:16px;line-height:20px;font-weight:normal;color:#56647a;">0</div>
<div class="t" style="left:1013.80px;top:697.76px;font-size:16px;line-height:20px;font-weight:normal;color:#56647a;">0</div>
<div class="t" style="left:1092.90px;top:697.76px;font-size:16px;line-height:20px;font-weight:normal;color:#56647a;">0</div>
<div class="t" style="left:1164.70px;top:697.76px;font-size:16px;line-height:20px;font-weight:normal;color:#56647a;">0</div>
<div class="t" style="left:1239.80px;top:697.76px;font-size:16px;line-height:20px;font-weight:normal;color:#56647a;">0</div>
<div class="t" style="left:1318.60px;top:697.76px;font-size:16px;line-height:20px;font-weight:normal;color:#56647a;">0</div>
<div class="t" style="left:1391.90px;top:697.76px;font-size:16px;line-height:20px;font-weight:normal;color:#56647a;">0</div>
<div class="t" style="left:1466.30px;top:697.76px;font-size:16px;line-height:20px;font-weight:normal;color:#56647a;">0</div>
<div class="t" style="left:1545.00px;top:697.76px;font-size:16px;line-height:20px;font-weight:normal;color:#56647a;">0</div>
<div class="bd" style="left:1617.30px;top:697.00px;background:#2eb85c;letter-spacing:0px">Generated</div>
<div class="bd" style="left:1695.40px;top:697.00px;background:#2eb85c;letter-spacing:0px">Approved</div>
<div class="b" style="left:1770.00px;top:694.00px;width:43.00px;height:39.00px;background:#39f;border-radius:4px"></div>
<svg class="b" style="left:1783.50px;top:705.00px;" width="17" height="15" viewBox="0 0 17 15"><path d="M1 13.6V1H6.2L7.8 2.8H12.6V5.4" fill="none" stroke="#fff" stroke-width="1.3"/><path d="M3.2 5.6H15.6L13.8 13.6H1.2Z" fill="none" stroke="#fff" stroke-width="1.3" stroke-linejoin="round"/></svg>
<div class="t" style="left:335.10px;top:755.76px;font-size:16px;line-height:20px;font-weight:normal;color:#56647a;">0</div>
<div class="t" style="left:413.70px;top:755.76px;font-size:16px;line-height:20px;font-weight:normal;color:#56647a;">0</div>
<div class="t" style="left:486.50px;top:755.76px;font-size:16px;line-height:20px;font-weight:normal;color:#56647a;">0</div>
<div class="t" style="left:560.80px;top:755.76px;font-size:16px;line-height:20px;font-weight:normal;color:#56647a;">0</div>
<div class="t" style="left:640.00px;top:755.76px;font-size:16px;line-height:20px;font-weight:normal;color:#56647a;">0</div>
<div class="t" style="left:711.90px;top:755.76px;font-size:16px;line-height:20px;font-weight:normal;color:#56647a;">0</div>
<div class="t" style="left:787.00px;top:755.76px;font-size:16px;line-height:20px;font-weight:normal;color:#56647a;">0</div>
<div class="t" style="left:865.80px;top:755.76px;font-size:16px;line-height:20px;font-weight:normal;color:#56647a;">0</div>
<div class="t" style="left:938.70px;top:755.76px;font-size:16px;line-height:20px;font-weight:normal;color:#56647a;">0</div>
<div class="t" style="left:1013.80px;top:755.76px;font-size:16px;line-height:20px;font-weight:normal;color:#56647a;">0</div>
<div class="t" style="left:1092.90px;top:755.76px;font-size:16px;line-height:20px;font-weight:normal;color:#56647a;">0</div>
<div class="t" style="left:1164.70px;top:755.76px;font-size:16px;line-height:20px;font-weight:normal;color:#56647a;">0</div>
<div class="t" style="left:1239.80px;top:755.76px;font-size:16px;line-height:20px;font-weight:normal;color:#56647a;">0</div>
<div class="t" style="left:1318.60px;top:755.76px;font-size:16px;line-height:20px;font-weight:normal;color:#56647a;">0</div>
<div class="t" style="left:1391.90px;top:755.76px;font-size:16px;line-height:20px;font-weight:normal;color:#56647a;">0</div>
<div class="t" style="left:1466.30px;top:755.76px;font-size:16px;line-height:20px;font-weight:normal;color:#56647a;">0</div>
<div class="t" style="left:1545.00px;top:755.76px;font-size:16px;line-height:20px;font-weight:normal;color:#56647a;">0</div>
<div class="bd" style="left:1617.30px;top:755.00px;background:#2eb85c;letter-spacing:0px">Generated</div>
<div class="bd" style="left:1695.40px;top:755.00px;background:#2eb85c;letter-spacing:0px">Approved</div>
<div class="b" style="left:1770.00px;top:752.00px;width:43.00px;height:39.00px;background:#39f;border-radius:4px"></div>
<svg class="b" style="left:1783.50px;top:763.00px;" width="17" height="15" viewBox="0 0 17 15"><path d="M1 13.6V1H6.2L7.8 2.8H12.6V5.4" fill="none" stroke="#fff" stroke-width="1.3"/><path d="M3.2 5.6H15.6L13.8 13.6H1.2Z" fill="none" stroke="#fff" stroke-width="1.3" stroke-linejoin="round"/></svg>
<div class="t" style="left:335.10px;top:814.76px;font-size:16px;line-height:20px;font-weight:normal;color:#56647a;">0</div>
<div class="t" style="left:413.70px;top:814.76px;font-size:16px;line-height:20px;font-weight:normal;color:#56647a;">0</div>
<div class="t" style="left:486.50px;top:814.76px;font-size:16px;line-height:20px;font-weight:normal;color:#56647a;">0</div>
<div class="t" style="left:560.80px;top:814.76px;font-size:16px;line-height:20px;font-weight:normal;color:#56647a;">0</div>
<div class="t" style="left:640.00px;top:814.76px;font-size:16px;line-height:20px;font-weight:normal;color:#56647a;">0</div>
<div class="t" style="left:711.90px;top:814.76px;font-size:16px;line-height:20px;font-weight:normal;color:#56647a;">0</div>
<div class="t" style="left:787.00px;top:814.76px;font-size:16px;line-height:20px;font-weight:normal;color:#56647a;">0</div>
<div class="t" style="left:865.80px;top:814.76px;font-size:16px;line-height:20px;font-weight:normal;color:#56647a;">0</div>
<div class="t" style="left:938.70px;top:814.76px;font-size:16px;line-height:20px;font-weight:normal;color:#56647a;">0</div>
<div class="t" style="left:1013.80px;top:814.76px;font-size:16px;line-height:20px;font-weight:normal;color:#56647a;">0</div>
<div class="t" style="left:1092.90px;top:814.76px;font-size:16px;line-height:20px;font-weight:normal;color:#56647a;">0</div>
<div class="t" style="left:1164.70px;top:814.76px;font-size:16px;line-height:20px;font-weight:normal;color:#56647a;">0</div>
<div class="t" style="left:1239.80px;top:814.76px;font-size:16px;line-height:20px;font-weight:normal;color:#56647a;">0</div>
<div class="t" style="left:1318.60px;top:814.76px;font-size:16px;line-height:20px;font-weight:normal;color:#56647a;">0</div>
<div class="t" style="left:1391.90px;top:814.76px;font-size:16px;line-height:20px;font-weight:normal;color:#56647a;">0</div>
<div class="t" style="left:1466.30px;top:814.76px;font-size:16px;line-height:20px;font-weight:normal;color:#56647a;">0</div>
<div class="t" style="left:1545.00px;top:814.76px;font-size:16px;line-height:20px;font-weight:normal;color:#56647a;">0</div>
<div class="bd" style="left:1617.30px;top:814.00px;background:#2eb85c;letter-spacing:0px">Generated</div>
<div class="bd" style="left:1695.40px;top:814.00px;background:#2eb85c;letter-spacing:0px">Approved</div>
<div class="b" style="left:1770.00px;top:811.00px;width:43.00px;height:39.00px;background:#39f;border-radius:4px"></div>
<svg class="b" style="left:1783.50px;top:822.00px;" width="17" height="15" viewBox="0 0 17 15"><path d="M1 13.6V1H6.2L7.8 2.8H12.6V5.4" fill="none" stroke="#fff" stroke-width="1.3"/><path d="M3.2 5.6H15.6L13.8 13.6H1.2Z" fill="none" stroke="#fff" stroke-width="1.3" stroke-linejoin="round"/></svg>
</body></html>
